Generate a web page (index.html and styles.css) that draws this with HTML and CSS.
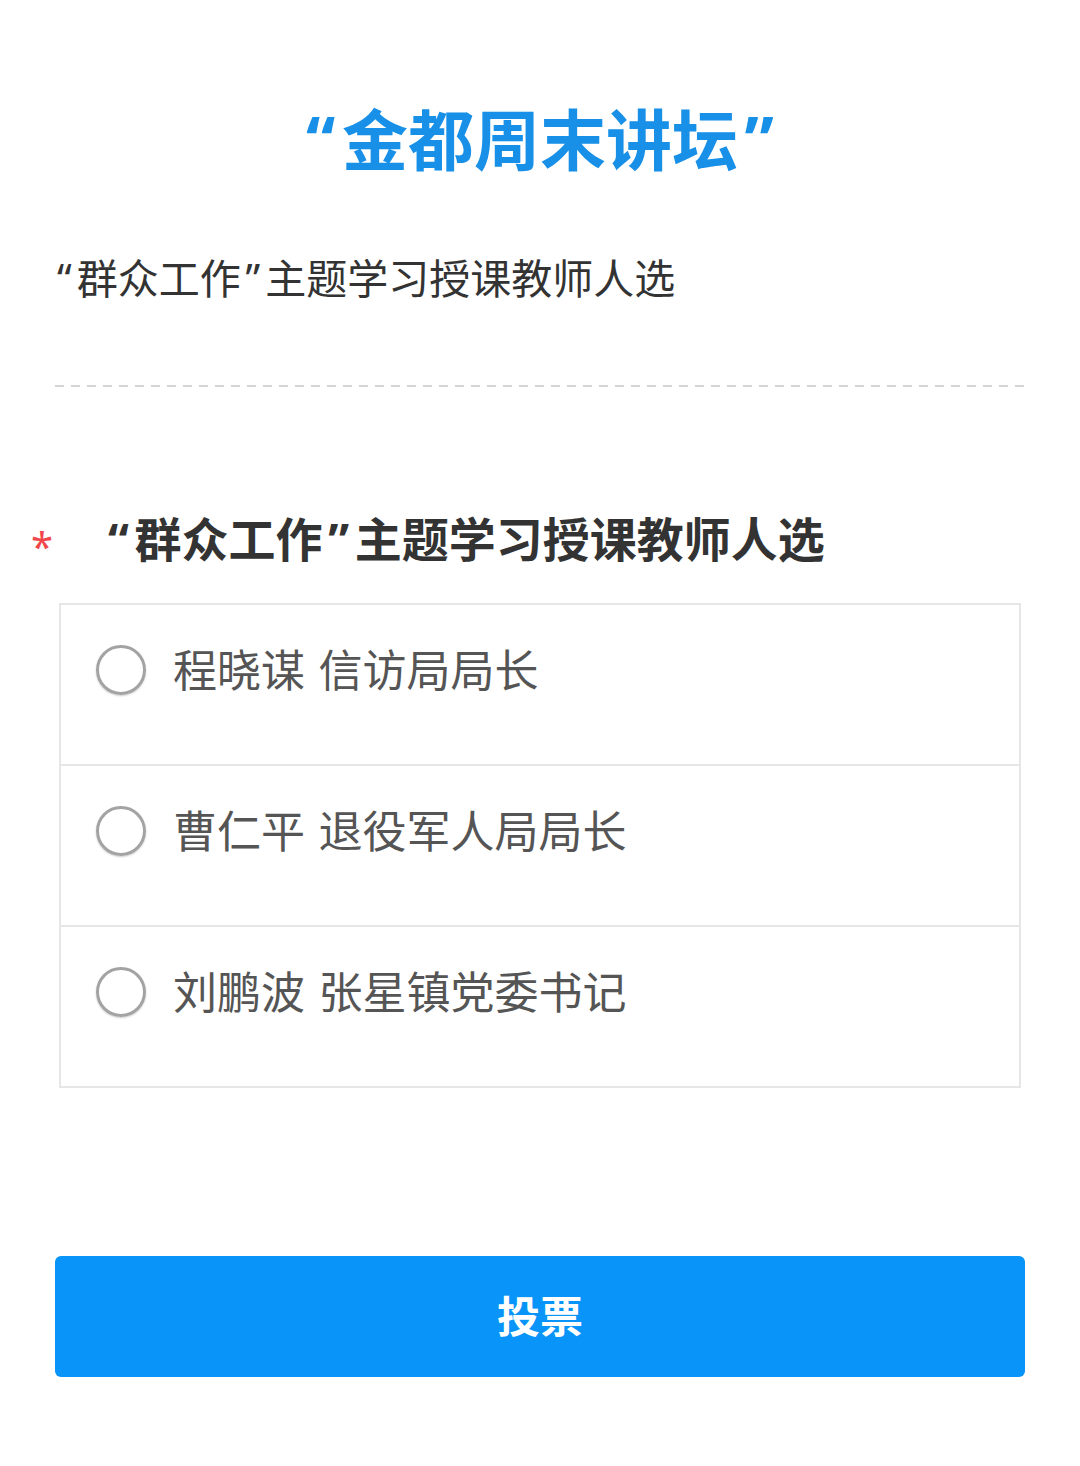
FILE: index.html
```html
<!DOCTYPE html>
<html lang="zh-CN">
<head>
<meta charset="utf-8">
<link rel="stylesheet" href="styles.css">
</head>
<body>
<div class="page">
  <h1 class="title"><span class="q ql">“</span>金都周末讲坛<span class="q qr">”</span></h1>
  <p class="subtitle"><span class="q ql">“</span>群众工作<span class="q qr">”</span>主题学习授课教师人选</p>
  <div class="divider"></div>
  <div class="question"><span class="star">*</span><span class="qtext"><span class="q ql">“</span>群众工作<span class="q qr">”</span>主题学习授课教师人选</span></div>
  <div class="options">
    <label class="option"><span class="radio"></span><span class="otext">程晓谋 信访局局长</span></label>
    <label class="option"><span class="radio"></span><span class="otext">曹仁平 退役军人局局长</span></label>
    <label class="option"><span class="radio"></span><span class="otext">刘鹏波 张星镇党委书记</span></label>
  </div>
  <button class="vote">投票</button>
</div>
</body>
</html>
```
FILE: styles.css
```css
* { box-sizing: border-box; }
body {
  margin: 0;
  background: #fff;
  font-family: "Noto Sans", "Noto Sans CJK SC", sans-serif;
}
.page {
  padding: 99px 55px 0;
}
.q {
  display: inline-block;
}
.ql {
  margin-right: 0.12em;
}
.qr {
  margin-left: 0.12em;
  margin-right: 0.12em;
}
.title {
  margin: 0;
  font-size: 66px;
  line-height: 80px;
  font-weight: 700;
  text-align: center;
  color: #1890e8;
}
.title .ql { margin-right: 0.1em; }
.title .qr { margin-left: 0.1em; margin-right: 0; }
.subtitle {
  margin: 75px 0 0 2px;
  font-size: 41px;
  line-height: 48px;
  color: #333;
}
.divider {
  margin-top: 83px;
  height: 2px;
  background: repeating-linear-gradient(to right, #d4d4d4 0 9px, transparent 9px 16px);
}
.question {
  margin: 124px 0 0 -24px;
  display: flex;
  align-items: center;
  height: 56px;
}
.star {
  color: #f0474a;
  font-size: 40px;
  width: 77px;
  padding-top: 12px;
}
.qtext {
  font-size: 47px;
  line-height: 56px;
  font-weight: 700;
  color: #333;
}
.options {
  margin: 36px 4px 0;
  border: 2px solid #e6e6e6;
  border-bottom: 0;
}
.option {
  display: flex;
  align-items: flex-start;
  height: 161px;
  padding: 40px 0 0 35px;
  border-bottom: 2px solid #e6e6e6;
}
.radio {
  flex: none;
  width: 50px;
  height: 50px;
  border-radius: 50%;
  border: 3px solid #a3a3a3;
  box-shadow: 0 1px 2px rgba(0,0,0,0.2);
  margin-right: 27px;
}
.otext {
  font-size: 44px;
  line-height: 50px;
  color: #555;
  word-spacing: 2px;
}
.vote {
  display: block;
  width: 100%;
  margin-top: 168px;
  height: 121px;
  border: 0;
  border-radius: 6px;
  background: #0894f8;
  color: #fff;
  font-family: inherit;
  font-size: 43px;
  font-weight: 700;
  padding-bottom: 6px;
}
```
